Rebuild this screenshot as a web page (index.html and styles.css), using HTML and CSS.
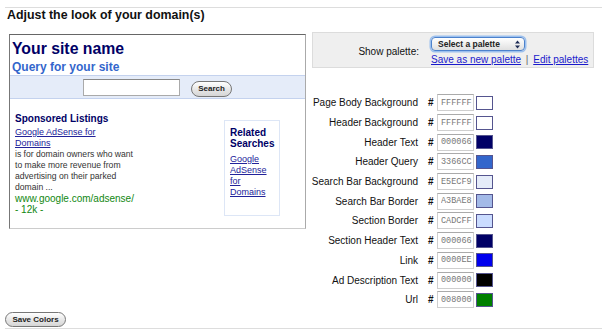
FILE: index.html
```html
<!DOCTYPE html>
<html lang="en">
<head>
  <meta charset="UTF-8">
  <title>Adjust the look of your domain(s)</title>
  <link rel="stylesheet" href="styles.css">
</head>
<body>
  <div class="page">
    <h1 class="title">Adjust the look of your domain(s)</h1>

    <div class="editor">
      <div class="preview">
        <div class="preview-header">
          <div class="site-name">Your site name</div>
          <div class="site-query">Query for your site</div>
        </div>
        <div class="search-bar">
          <input type="text" class="search-input">
          <button class="pill-btn search-btn">Search</button>
        </div>
        <div class="preview-body">
          <div class="listings">
            <div class="section-title">Sponsored Listings</div>
            <a class="ad-title" href="#">Google AdSense for Domains</a>
            <div class="ad-desc">is for domain owners who want to make more revenue from advertising on their parked domain ...</div>
            <div class="ad-url">www.google.com/adsense/ - 12k -</div>
          </div>
          <div class="related">
            <div class="section-title">Related Searches</div>
            <a class="related-link" href="#">Google AdSense for Domains</a>
          </div>
        </div>
      </div>

      <div class="settings">
        <div class="palette-bar">
          <label class="palette-label">Show palette:</label>
          <div class="palette-controls">
            <div class="fake-select">
              <span>Select a palette</span>
              <svg class="select-arrows" width="9" height="11" viewBox="0 0 9 11">
                <path d="M4.5 1.5 L7 4.5 L2 4.5 Z M4.5 9.5 L7 6.5 L2 6.5 Z" fill="#1d2a55"/>
              </svg>
            </div>
            <div class="palette-links">
              <a href="#">Save as new palette</a> <span class="sep">|</span> <a href="#">Edit palettes</a>
            </div>
          </div>
        </div>

        <div class="color-list">
          <div class="color-row">
            <span class="color-label">Page Body Background</span>
            <span class="hash">#</span>
            <input class="color-input" type="text" value="FFFFFF">
            <span class="swatch" style="background:#FFFFFF"></span>
          </div>
          <div class="color-row">
            <span class="color-label">Header Background</span>
            <span class="hash">#</span>
            <input class="color-input" type="text" value="FFFFFF">
            <span class="swatch" style="background:#FFFFFF"></span>
          </div>
          <div class="color-row">
            <span class="color-label">Header Text</span>
            <span class="hash">#</span>
            <input class="color-input" type="text" value="000066">
            <span class="swatch" style="background:#000066"></span>
          </div>
          <div class="color-row">
            <span class="color-label">Header Query</span>
            <span class="hash">#</span>
            <input class="color-input" type="text" value="3366CC">
            <span class="swatch" style="background:#3366CC"></span>
          </div>
          <div class="color-row">
            <span class="color-label">Search Bar Background</span>
            <span class="hash">#</span>
            <input class="color-input" type="text" value="E5ECF9">
            <span class="swatch" style="background:#E5ECF9"></span>
          </div>
          <div class="color-row">
            <span class="color-label">Search Bar Border</span>
            <span class="hash">#</span>
            <input class="color-input" type="text" value="A3BAE8">
            <span class="swatch" style="background:#A3BAE8"></span>
          </div>
          <div class="color-row">
            <span class="color-label">Section Border</span>
            <span class="hash">#</span>
            <input class="color-input" type="text" value="CADCFF">
            <span class="swatch" style="background:#CADCFF"></span>
          </div>
          <div class="color-row">
            <span class="color-label">Section Header Text</span>
            <span class="hash">#</span>
            <input class="color-input" type="text" value="000066">
            <span class="swatch" style="background:#000066"></span>
          </div>
          <div class="color-row">
            <span class="color-label">Link</span>
            <span class="hash">#</span>
            <input class="color-input" type="text" value="0000EE">
            <span class="swatch" style="background:#0000EE"></span>
          </div>
          <div class="color-row">
            <span class="color-label">Ad Description Text</span>
            <span class="hash">#</span>
            <input class="color-input" type="text" value="000000">
            <span class="swatch" style="background:#000000"></span>
          </div>
          <div class="color-row">
            <span class="color-label">Url</span>
            <span class="hash">#</span>
            <input class="color-input" type="text" value="008000">
            <span class="swatch" style="background:#008000"></span>
          </div>
        </div>
      </div>
    </div>

    <div class="footer">
      <button class="pill-btn save-btn">Save Colors</button>
    </div>
  </div>
</body>
</html>
```

FILE: styles.css
```css
  body {
    margin: 0;
    background: #ffffff;
    font-family: 'Liberation Sans', Arial, sans-serif;
    color: #111;
  }

  .page {
    width: 597px;
    padding: 4px 0 0 5px;
  }

  .title {
    margin: 3px 0 0;
    padding-top: 0;
    padding-left: 2px;
    border-top: 1px solid #dddddd;
    font-size: 12.4px;
    line-height: 15px;
    font-weight: bold;
    color: #111;
  }

  .editor {
    display: flex;
    align-items: flex-start;
    gap: 6px;
    margin-top: 9px;
  }

  /* preview of the parked domain page */
  .preview {
    width: 297px;
    height: 195px;
    box-sizing: border-box;
    margin-left: 4px;
    margin-top: 2px;
    border-top: 1px solid #666;
    border-left: 1px solid #777;
    border-right: 1px solid #aaa;
    border-bottom: 1px solid #ccc;
    display: flex;
    flex-direction: column;
  }

  .preview-header {
    padding: 4px 2px 1px;
  }

  .site-name {
    font-size: 15.8px;
    line-height: 19px;
    font-weight: bold;
    color: #000066;
  }

  .site-query {
    margin-top: 2px;
    font-size: 12px;
    line-height: 14px;
    font-weight: bold;
    color: #3366CC;
  }

  .search-bar {
    height: 24px;
    box-sizing: border-box;
    background: #E5ECF9;
    border-top: 1px solid #c4d2ee;
    border-bottom: 1px solid #c4d2ee;
    display: flex;
    align-items: center;
    justify-content: center;
    gap: 11px;
  }

  .search-input {
    width: 97px;
    height: 17px;
    box-sizing: border-box;
    margin: 0;
    border: 1px solid #aaa;
    border-top-color: #888;
    background: #fff;
  }

  .pill-btn {
    margin: 0;
    padding: 0;
    border: 1px solid #777;
    border-radius: 8px;
    background: linear-gradient(#ffffff, #e4e4e4 60%, #d6d6d6);
    font-family: 'Liberation Sans', Arial, sans-serif;
    font-size: 8px;
    font-weight: bold;
    color: #222;
    box-sizing: border-box;
  }

  .search-btn {
    width: 41px;
    height: 16px;
    margin-top: 3px;
  }

  .preview-body {
    flex: 1;
    display: flex;
    align-items: flex-start;
    padding: 12.5px 25px 0 5px;
  }

  .listings {
    width: 124px;
  }

  .section-title {
    font-size: 10px;
    line-height: 13px;
    font-weight: bold;
    color: #000066;
  }

  .ad-title {
    display: block;
    width: 96px;
    margin-top: 2px;
    font-size: 9px;
    line-height: 11px;
    color: #22229a;
  }

  .ad-desc {
    font-size: 8.6px;
    line-height: 11px;
    color: #333;
  }

  .ad-url {
    font-size: 10px;
    line-height: 11px;
    color: #118811;
  }

  .related {
    margin-left: auto;
    margin-top: 8px;
    width: 56px;
    height: 96px;
    box-sizing: border-box;
    border: 1px solid #dde6f6;
    padding: 6px 3px 0 5px;
  }

  .related .section-title {
    line-height: 11px;
  }

  .related-link {
    display: block;
    margin-top: 5px;
    font-size: 9px;
    line-height: 11px;
    color: #22229a;
  }

  /* settings column */
  .settings {
    flex: 1;
  }

  .palette-bar {
    width: 282px;
    height: 36px;
    box-sizing: border-box;
    padding-top: 3px;
    background: #efefef;
    border: 1px solid #dcdcdc;
    display: flex;
    align-items: center;
  }

  .palette-label {
    width: 106px;
    margin-right: 12px;
    text-align: right;
    font-size: 10px;
    line-height: 12px;
    color: #111;
  }

  .fake-select {
    position: relative;
    width: 94px;
    height: 14px;
    box-sizing: border-box;
    border: 1px solid #4d82cc;
    border-radius: 4px;
    box-shadow: 0 0 0 1.5px #9cc0ee;
    background: linear-gradient(#ffffff, #eeeeee 55%, #e0e0e0);
    font-size: 8.5px;
    font-weight: bold;
    line-height: 12px;
    padding-left: 6px;
    color: #222;
  }

  .select-arrows {
    position: absolute;
    right: 2px;
    top: 0.5px;
  }

  .palette-links {
    margin-top: 3px;
    font-size: 10px;
    line-height: 12px;
  }

  .palette-links a {
    color: #1a1acc;
  }

  .palette-links .sep {
    color: #666;
    margin: 0 2px;
  }

  .color-list {
    margin-top: 25px;
  }

  .color-row {
    display: flex;
    align-items: center;
    height: 19.7px;
  }

  .color-label {
    flex: none;
    width: 106px;
    display: flex;
    justify-content: flex-end;
    white-space: nowrap;
    font-size: 10px;
    color: #111;
  }

  .hash {
    width: 6px;
    margin-left: 10px;
    margin-right: 3px;
    font-size: 10px;
    font-weight: bold;
  }

  .color-input {
    width: 37px;
    height: 17px;
    box-sizing: border-box;
    margin: 0;
    padding: 0 0 0 3px;
    border: 1px solid #cfcfcf;
    border-top-color: #aaa;
    background: #fff;
    font-family: 'Liberation Mono', 'Courier New', monospace;
    font-size: 8.5px;
    color: #777;
  }

  .swatch {
    width: 17px;
    height: 14px;
    box-sizing: border-box;
    margin-left: 2px;
    border: 1px solid #55558f;
  }

  .footer {
    margin-top: 2px;
    border-bottom: 1px solid #dddddd;
    padding-bottom: 1px;
  }

  .save-btn {
    display: block;
    width: 61px;
    height: 15px;
  }
```
